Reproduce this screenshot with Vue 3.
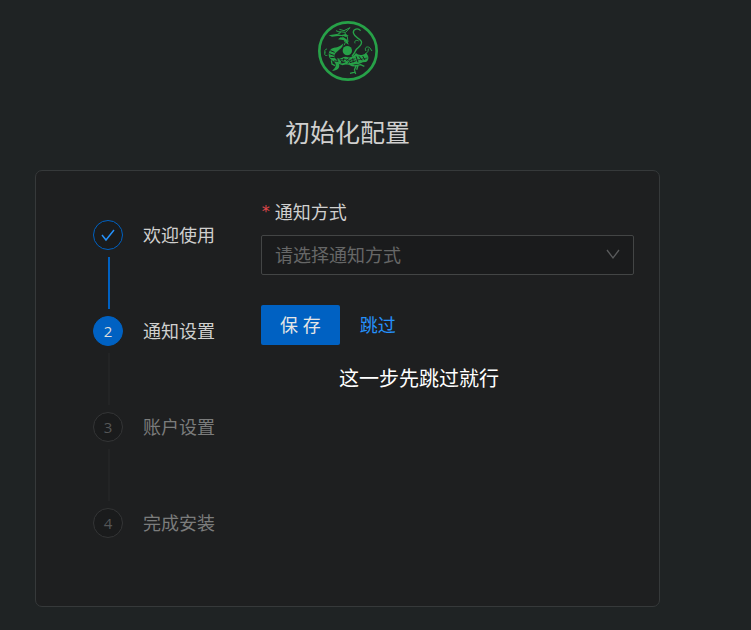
<template>
    <main class="setup">
        <svg class="logo" viewBox="30 27 180 180" role="img" aria-label="logo">
            <circle cx="120" cy="117" r="86" class="line" stroke-width="8" />
            <circle cx="118" cy="116" r="14" class="fill" />
            <!-- head and horns -->
            <path class="fill" d="M62 70 L86 66 L100 69 L112 66 L122 71 L114 75 L106 72 L90 72 L72 74 Z" />
            <path class="fill" d="M90 82 L98 76 L109 77 L118 84 L122 98 L114 93 L110 85 L100 83 Z" />
            <path class="line" stroke-width="3" d="M94 52 L108 56 L126 47 L113 61 L94 59 M84 56 L98 62 L88 67 M110 62 L118 74 L120 90 M104 74 L112 92 L108 100" />
            <!-- body and tail -->
            <path class="fill" d="M106 94 C98 102 92 106 78 107 C66 109 60 121 63 134 C67 145 79 146 82 154 C86 162 80 171 72 176 C87 176 97 169 93 155 C91 144 79 141 79 132 C79 122 90 119 103 104 Z" />
            <path class="fill" d="M88 137 C97 146 103 132 116 135 C129 139 137 132 144 123 C150 130 163 132 174 123 C184 132 184 144 174 150 C160 149 156 158 142 157 C126 163 116 154 104 160 L91 155 Z" />
            <path class="gap" stroke-width="3" d="M67 116 L80 121 M64 125 L78 130 M67 136 L80 137 M78 147 L91 148 M97 143 L104 154 M108 138 L104 150 M114 146 L124 139 M119 155 L130 144 M134 139 L136 151 M144 133 L150 151 M153 133 L162 145 M164 132 L171 144 M98 153 L112 150 M126 152 L145 146" />
            <path class="gap" stroke-width="2" d="M94 143 L116 142 M118 147 L142 140 M148 144 L178 138" />
            <!-- whiskers, claws and clouds -->
            <path class="line" stroke-width="4" d="M136 63 C135 50 150 47 158 56 M136 63 C141 78 153 77 160 88 C164 99 152 105 146 111 C140 119 139 126 132 132" />
            <path class="line" stroke-width="3" d="M152 87 C145 82 138 87 141 94 M174 117 C168 108 176 101 185 107 L192 117 M172 125 C180 122 181 116 181 110 M58 130 C49 133 48 124 52 119 M57 111 C49 112 49 119 52 124" />
            <path class="line" stroke-width="4" d="M125 157 C141 167 147 159 158 158 L169 163 M145 160 L139 174 M126 184 L141 180 L143 186 M139 174 L142 182 M151 158 L146 173 M70 145 L72 156 L81 161" />
        </svg>
        <h1 class="title">初始化配置</h1>

        <section class="card">
            <ol class="steps">
                <li v-for="(step, index) in steps" :key="step" class="step" :class="stepState(index)">
                    <span class="step-icon">
                        <svg v-if="index < current" class="check" viewBox="0 0 16 16" aria-hidden="true">
                            <path d="M2 8 L6 13 L14 3" />
                        </svg>
                        <template v-else>{{ index + 1 }}</template>
                    </span>
                    <span class="step-title">{{ step }}</span>
                </li>
            </ol>

            <form class="form" @submit.prevent="next">
                <label class="label" for="notify"><span class="required">*</span>通知方式</label>
                <div class="select-box">
                    <select id="notify" v-model="notifyType" class="select" required>
                        <option value="" disabled>请选择通知方式</option>
                    </select>
                    <svg class="arrow" viewBox="0 0 14 14" aria-hidden="true">
                        <path d="M1 2 L7 10 L13 2" />
                    </svg>
                </div>
                <div class="actions">
                    <button type="submit" class="save">保 存</button>
                    <a href="#" class="skip" @click.prevent="next">跳过</a>
                </div>
                <p class="hint">这一步先跳过就行</p>
            </form>
        </section>
    </main>
</template>

<script setup>
import { ref } from 'vue';

const steps = ['欢迎使用', '通知设置', '账户设置', '完成安装'];
const current = ref(1);
const notifyType = ref('');

const stepState = (index) => {
    if (index < current.value) return 'finished';
    return index === current.value ? 'active' : 'waiting';
};

const next = () => {
    if (current.value < steps.length - 1) current.value++;
};
</script>

<style>
body {
    margin: 0;
    background-color: #1f2324;
}
</style>

<style scoped>
.setup {
    display: flex;
    flex-direction: column;
    align-items: center;
    padding: 21px 91px 23px 35px;
    font-family: "Open Sans", "Noto Sans CJK SC", sans-serif;
    font-size: 18px;
    line-height: 28px;
    color: #d0d0cf;
}

.logo {
    width: 60px;
    height: 60px;
}

.logo .line {
    fill: none;
    stroke: #27a148;
}

.logo .fill {
    fill: #27a148;
}

.logo .gap {
    fill: none;
    stroke: #1f2324;
}

.title {
    margin: 31px 0 18px;
    font-size: 25px;
    font-weight: 400;
    line-height: 40px;
}

.card {
    display: flex;
    align-self: stretch;
    padding: 27px 25px 68px 57px;
    border: 1px solid #36393a;
    border-radius: 7px;
    background-color: #1e1f20;
}

.steps {
    flex: 0 0 168px;
    margin: 22px 0 0;
    padding: 0;
    list-style: none;
}

.step {
    display: grid;
    grid-template-columns: 30px 1fr;
    column-gap: 20px;
}

/* connector to the next step */
.step:not(:last-child)::after {
    content: "";
    width: 2px;
    height: 52px;
    margin: 7px 0 7px 15px;
    background-color: #232425;
}

.step.finished:not(:last-child)::after {
    background-color: #0061c2;
}

.step-icon {
    display: flex;
    align-items: center;
    justify-content: center;
    box-sizing: border-box;
    width: 30px;
    height: 30px;
    border: 1px solid #343536;
    border-radius: 50%;
    background-color: #1a1b1c;
    font-size: 15px;
    color: #555657;
}

.finished .step-icon {
    border-color: #0061c2;
}

.active .step-icon {
    border-color: #0061c2;
    background-color: #0061c2;
    color: #dddddd;
}

.check {
    width: 16px;
    height: 16px;
    fill: none;
    stroke: #2591fb;
    stroke-width: 1.5;
}

.step-title {
    line-height: 30px;
}

.waiting .step-title {
    color: #7b7c7c;
}

.form {
    flex: 1;
    min-width: 0;
}

.label {
    display: flex;
    gap: 4px;
    margin-bottom: 9px;
}

.required {
    font-family: "DejaVu Sans Mono", monospace;
    font-size: 16px;
    color: #e0484b;
}

.select-box {
    display: grid;
    align-items: center;
}

.select,
.arrow {
    grid-area: 1 / 1;
}

.select {
    appearance: none;
    box-sizing: border-box;
    width: 100%;
    height: 40px;
    padding: 0 40px 0 13px;
    border: 1px solid #434545;
    border-radius: 2px;
    background-color: #1a1b1c;
    font: inherit;
    color: #666767;
}

.arrow {
    justify-self: end;
    width: 14px;
    height: 14px;
    margin-right: 14px;
    fill: none;
    stroke: #5a5b5c;
    stroke-width: 1.3;
    pointer-events: none;
}

.actions {
    display: flex;
    align-items: center;
    gap: 20px;
    margin-top: 30px;
}

.save {
    height: 40px;
    padding: 0 19px;
    border: none;
    border-radius: 2px;
    background-color: #0061c2;
    font: inherit;
    color: #e6e6e6;
    cursor: pointer;
}

.skip {
    color: #2591fb;
    text-decoration: none;
}

.hint {
    margin: 20px 0 0 78px;
    font-size: 20px;
    color: #ffffff;
}
</style>
